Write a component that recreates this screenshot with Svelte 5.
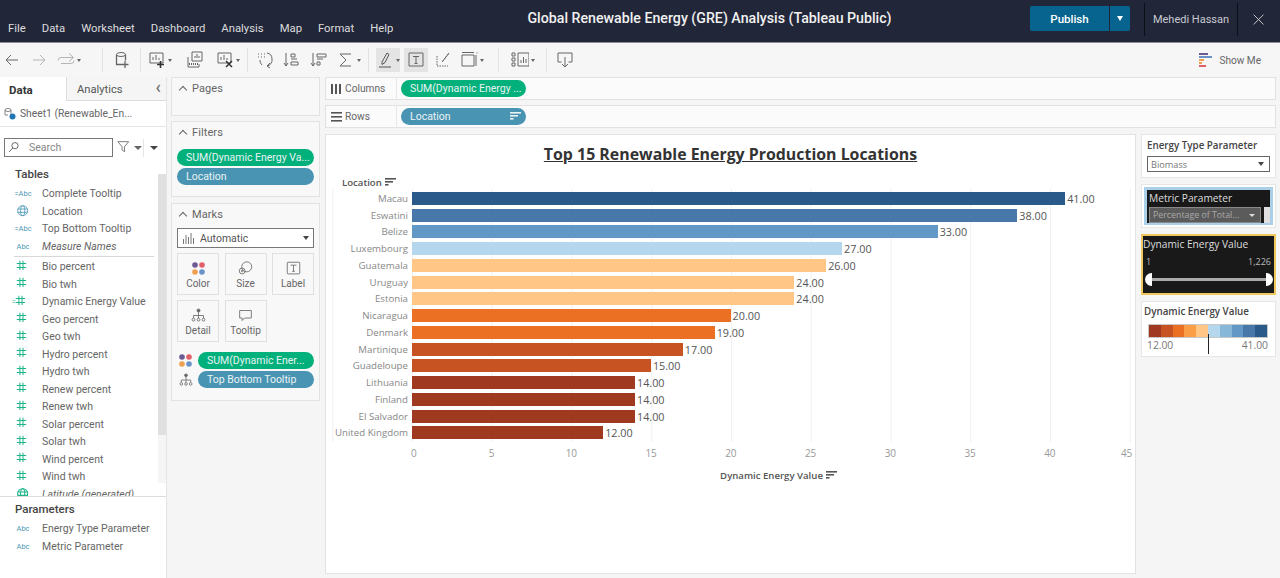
<script>
  const menu = ['File','Data','Worksheet','Dashboard','Analysis','Map','Format','Help'];
  const svg = {
    back:'<path d="M15 9H3M8 4L3 9l5 5" />',
    fwd:'<path d="M3 9h12M10 4l5 5-5 5" />',
    undo:'<path d="M1 9.500a3 3 0 0 1 3-3h12M12 2.500l4.500 4-4.500 4M4 12.500h10a3 3 0 0 0 3-3" />',
    newds:'<ellipse cx="8" cy="3.500" rx="4.500" ry="2"/><path d="M3.500 3.500v10h5M12.500 3.500v6M12 10v7M8.500 13.500h7" stroke-width="1.300"/>',
    newws:'<path d="M2 2h13v10H2zM5 9V6M8 9V4M11 9V7"/><path d="M12.500 10v7M9 13.500h7" stroke="#333" stroke-width="1.600"/>',
    dupe:'<path d="M7 1h10v9H7zM10 7V5M12 7V3M14 7V5M3 6v10h11v-3"/><path d="M4 13h9" stroke-dasharray="1 1" stroke-width="2"/>',
    clear:'<path d="M2 2h13v10H2zM5 9V6M8 9V4M11 9V7"/><path d="M10 10l6 6M16 10l-6 6" stroke="#333" stroke-width="1.500"/>',
    swap:'<path d="M2 3h1M5 3h1M8 3h1M2 6h1M5 6h1M8 6h1M11 2a6 6 0 0 1 5 6 6 6 0 0 1-5 7M14 12l-3 3 3 2M4 9a6 6 0 0 0 2 5" />',
    sortA:'<path d="M3 2v13M1 12l2 3 2-3M8 3h4v3H8zM8 8h6M8 11h7v3H8z"/>',
    sortD:'<path d="M3 2v13M1 12l2 3 2-3M7 3h9v3H7zM7 8h6M7 11h3v3H7z"/>',
    sum:'<path d="M14 3H3l6 6-6 6h11" />',
    high:'<path d="M6 11L11 2l2 1.500-4 8-3 2zM3 16h12" stroke="#555"/>',
    text:'<path d="M2 2h14v13H2z"/><path d="M6 5.500h6M9 5.500v7M7.500 12.500h3" />',
    fix:'<path d="M2 5v10h11M8 10l6-8" stroke-dasharray="1.500 1"/><path d="M7 11l7-9" />',
    fit:'<path d="M2 4h12v11H2zM2 1.500h12M16 4v11" /><path d="M17 1.500v1" />',
    cards:'<path d="M1 2h3v3H1zM1 7h3v3H1zM1 12h3v3H1zM7 2h11v13H7zM10 12V9M12.500 12V6M15 12V8" />',
    tip:'<path d="M5.500 11H2V2h14v9h-3.500M9 6v10M6 13l3 3 3-3"/>',
    size:'<circle cx="10.500" cy="7" r="6"/><circle cx="5" cy="12" r="3.500"/><circle cx="5" cy="12" r="1"/>',
    label:'<rect x="1.500" y="1.500" width="15" height="14" rx="1"/><path d="M5.500 5h7M9 5v7.500M7.500 12.500h3"/>',
    detail:'<circle cx="9" cy="3" r="1.800" fill="#666"/><path d="M9 5v4M3 12V9h12v3M9 9v3"/><circle cx="3" cy="14" r="1.700"/><circle cx="9" cy="14" r="1.700"/><circle cx="15" cy="14" r="1.700"/>',
    bubble:'<path d="M2 3h14v9H8l-3 3v-3H2z"/>',
    search:'<circle cx="9" cy="6" r="4"/><path d="M6 9l-4.500 5"/>',
    funnel:'<path d="M1 2h13L9 8v6l-3-2V8z"/>',
    globe:'<circle cx="8" cy="8" r="6"/><ellipse cx="8" cy="8" rx="2.500" ry="6"/><path d="M2 6h12M2 10h12"/>',
    close:'<path d="M3 3l11 11M14 3L3 14"/>',
    hash:'<path d="M5 1v12M9 1v12M1 4.500h12M1 9.500h12"/>'
  };
  const tools = [
    { w:103, cls:'g-a', items:[['back',18],['fwd',18,1],['undo',18,1,1,1]] },
    { w:38, cls:'', items:[['newds',18]] },
    { w:107, cls:'g-c', items:[['newws',18,0,1],['dupe',18],['clear',18,0,1]] },
    { w:121, cls:'g-d', items:[['swap',18],['sortA',18],['sortD',18],['sum',18,0,1]] },
    { w:130, cls:'g-e', items:[['high',18,0,1,0,1],['text',18,0,0,0,1],['fix',18],['fit',18,0,1]] },
    { w:48, cls:'', items:[['cards',18,0,1]] },
    { w:36, cls:'', items:[['tip',18]] }
  ];
  const dims = [
    ['calc','Complete Tooltip'],['globe','Location'],['calc','Top Bottom Tooltip'],['abc','Measure Names',1]
  ];
  const meas = ['Bio percent','Bio twh','Dynamic Energy Value','Geo percent','Geo twh','Hydro percent','Hydro twh','Renew percent','Renew twh','Solar percent','Solar twh','Wind percent','Wind twh'];
  const bars = [
    ['Macau',41,'#2a5a8a'],['Eswatini',38,'#4778a9'],['Belize',33,'#6298c6'],['Luxembourg',27,'#b5d7ee'],
    ['Guatemala',26,'#ffc685'],['Uruguay',24,'#ffc685'],['Estonia',24,'#ffc685'],['Nicaragua',20,'#ec7024'],
    ['Denmark',19,'#ec7024'],['Martinique',17,'#c75222'],['Guadeloupe',15,'#c75222'],['Lithuania',14,'#9f3a20'],
    ['Finland',14,'#9f3a20'],['El Salvador',14,'#9f3a20'],['United Kingdom',12,'#9f3a20']
  ];
  const ticks = [0,5,10,15,20,25,30,35,40,45];
  const ramp = ['#9f3a20','#c75222','#ec7024','#fa9f47','#ffc685','#b5d7ee','#86b7d9','#6298c6','#4778a9','#2a5a8a'];
</script>

{#snippet ic(name, size = 18, cls = '')}
  <svg class="ic {cls}" width={size} height={size} viewBox="0 0 18 18" fill="none" stroke="currentColor" stroke-width="1">{@html svg[name]}</svg>
{/snippet}
{#snippet sorter()}
  <svg class="sorter" width="11" height="9" viewBox="0 0 11 9" fill="currentColor"><rect width="11" height="1.600"/><rect y="3" width="8" height="1.600"/><rect y="6" width="3.500" height="1.600"/></svg>
{/snippet}
{#snippet dots()}
  <svg width="13" height="13" viewBox="0 0 13 13"><circle cx="3" cy="3" r="2.800" fill="#6c5a92"/><circle cx="10" cy="3" r="2.800" fill="#e0606a"/><circle cx="3" cy="10" r="2.800" fill="#f0a050"/><circle cx="10" cy="10" r="2.800" fill="#6a93c8"/></svg>
{/snippet}

<div class="app">
  <header class="top">
    <nav class="menu">{#each menu as m}<span>{m}</span>{/each}</nav>
    <h1>Global Renewable Energy (GRE) Analysis (Tableau Public)</h1>
    <div class="acct">
      <div class="pub"><span class="pub-main">Publish</span><span class="pub-car"><i class="tri white"></i></span></div>
      <span class="user">Mehedi Hassan</span>
      <span class="x">{@render ic('close', 16)}</span>
    </div>
  </header>

  <div class="toolbar">
    {#each tools as g}
      <div class="tgroup {g.cls}" style="width:{g.w}px">
        {#each g.items as t}
          <span class="tool" class:dim={t[2]} class:on={t[5]}>{@render ic(t[0], t[1])}{#if t[3]}<i class="tri small"></i>{/if}</span>
        {/each}
      </div>
    {/each}
    <div class="showme">
      <svg width="13" height="14" viewBox="0 0 13 14"><rect width="9" height="2" fill="#6c5a92"/><rect y="3" width="13" height="2" fill="#6a93c8"/><rect y="6" width="5" height="2" fill="#f0a050"/><rect y="9" width="3" height="2" fill="#f0a050"/><rect y="12" width="7" height="2" fill="#e0606a"/></svg>
      <span>Show Me</span>
    </div>
  </div>

  <div class="body">
    <aside class="data">
      <div class="tabs">
        <span class="tab act">Data</span>
        <span class="tab">Analytics</span>
        <span class="chev">‹</span>
      </div>
      <div class="source">
        <svg width="13" height="13" viewBox="0 0 13 13" fill="none" stroke="#888"><ellipse cx="5" cy="3" rx="3" ry="1.500"/><path d="M2 3v5h3M8 3v4"/><circle cx="9.500" cy="9.500" r="3" fill="#1f77b4" stroke="none"/></svg>
        <span>Sheet1 (Renewable_En...</span>
      </div>
      <div class="searchrow">
        <div class="search">{@render ic('search', 14)}<span>Search</span></div>
        <span class="funnel">{@render ic('funnel', 15)}<i class="tri small"></i></span>
        <i class="vsep"></i>
        <i class="tri dark"></i>
      </div>
      <div class="fields">
        <div class="scroll"><i></i></div>
        <div class="flist">
          <h3>Tables</h3>
          {#each dims as d}
            <div class="field" class:em={d[2]}>
              <span class="fi">
                {#if d[0]==='globe'}<span class="teal">{@render ic('globe', 15)}</span>
                {:else}<span class="abc">{d[0]==='calc'?'=':''}Abc</span>{/if}
              </span>
              <span>{d[1]}</span>
            </div>
          {/each}
          <hr />
          {#each meas as m}
            <div class="field">
              <span class="fi green">{#if m.startsWith('Dynamic')}<b>=</b>{/if}{@render ic('hash', 14)}</span>
              <span>{m}</span>
            </div>
          {/each}
          <div class="field em cut"><span class="fi green">{@render ic('globe', 15)}</span><span>Latitude (generated)</span></div>
        </div>
      </div>
      <div class="params">
        <h3>Parameters</h3>
        <div class="field"><span class="fi"><span class="abc">Abc</span></span><span>Energy Type Parameter</span></div>
        <div class="field"><span class="fi"><span class="abc">Abc</span></span><span>Metric Parameter</span></div>
      </div>
    </aside>

    <section class="cards">
      <div class="card pages"><div class="chd"><i class="up"></i>Pages</div></div>
      <div class="card filters">
        <div class="chd"><i class="up"></i>Filters</div>
        <div class="pill g">SUM(Dynamic Energy Va...</div>
        <div class="pill b">Location</div>
      </div>
      <div class="card marks">
        <div class="chd"><i class="up"></i>Marks</div>
        <div class="select">
          <svg width="12" height="11" viewBox="0 0 12 11" stroke="#777" fill="none"><path d="M1.500 11V6M4 11V2M6.500 11V4M9 11V0M11.500 11V5"/></svg>
          <span>Automatic</span><i class="tri dark"></i>
        </div>
        <div class="mbtns">
          <div class="mbtn">{@render dots()}<span>Color</span></div>
          <div class="mbtn">{@render ic('size', 15)}<span>Size</span></div>
          <div class="mbtn">{@render ic('label', 15)}<span>Label</span></div>
          <div class="mbtn">{@render ic('detail', 15)}<span>Detail</span></div>
          <div class="mbtn">{@render ic('bubble', 15)}<span>Tooltip</span></div>
        </div>
        <div class="mrow">{@render dots()}<div class="pill g">SUM(Dynamic Ener...</div></div>
        <div class="mrow">{@render ic('detail', 14)}<div class="pill b">Top Bottom Tooltip</div></div>
      </div>
    </section>

    <main class="main">
      <div class="shelf">
        <div class="slabel"><svg width="11" height="10" viewBox="0 0 11 10" fill="#555"><rect width="2" height="10"/><rect x="4" width="2" height="10"/><rect x="8" width="2" height="10"/></svg>Columns</div>
        <div class="pill g wide">SUM(Dynamic Energy ...</div>
      </div>
      <div class="shelf">
        <div class="slabel"><svg width="11" height="10" viewBox="0 0 11 10" fill="#555"><rect width="11" height="1.600"/><rect y="4" width="11" height="1.600"/><rect y="8" width="11" height="1.600"/></svg>Rows</div>
        <div class="pill b wide rowpill"><span>Location</span>{@render sorter()}</div>
      </div>
      <div class="stage">
        <div class="sheet">
          <h2>Top 15 Renewable Energy Production Locations</h2>
          <div class="axhead">Location {@render sorter()}</div>
          <div class="plot">
            {#each bars as b}
              <div class="row">
                <span class="loc">{b[0]}</span>
                <div class="track">
                  <div class="bar" style="width:{b[1]*15.93}px;background:{b[2]}"></div>
                  <span class="val">{b[1]}.00</span>
                </div>
              </div>
            {/each}
          </div>
          <div class="axis">
            {#each ticks as t}<span>{t}</span>{/each}
          </div>
          <div class="axtitle">Dynamic Energy Value {@render sorter()}</div>
        </div>
        <div class="side">
          <div class="pcard">
            <div class="ptitle">Energy Type Parameter</div>
            <div class="pselect"><span>Biomass</span><i class="tri dark"></i></div>
          </div>
          <div class="pcard metric">
            <div class="blk blue">
              <div class="ptitle lt">Metric Parameter</div>
              <div class="mselrow"><div class="msel"><span>Percentage of Total...</span><i class="tri white"></i></div><i class="stub"></i></div>
            </div>
          </div>
          <div class="pcard dyn">
            <div class="blk yellow">
              <div class="ptitle lt">Dynamic Energy Value</div>
              <div class="range"><span>1</span><span>1,226</span></div>
              <div class="slider"><i class="knob l"></i><i class="knob r"></i></div>
            </div>
          </div>
          <div class="pcard legend">
            <div class="ptitle">Dynamic Energy Value</div>
            <div class="ramp">{#each ramp as c}<i style="background:{c}"></i>{/each}</div>
            <div class="rlab"><span>12.00</span><span>41.00</span><i class="mark"></i></div>
          </div>
        </div>
      </div>
    </main>
  </div>
</div>

<style>
  :global(body){margin:0;background:#f5f5f5;}
  *{box-sizing:border-box;}
  i{display:block;font-style:normal;}
  .app{width:1280px;height:578px;overflow:hidden;display:flex;flex-direction:column;font-family:Roboto,"Liberation Sans",sans-serif;color:#666;background:#f5f5f5;}
  .ic{display:block;flex:none;}

  .tri{width:0;height:0;border-left:4px solid transparent;border-right:4px solid transparent;border-top:5px solid #333;}
  .tri.white{border-top-color:#ddd;}
  .tri.dark{border-top-color:#444;}
  .tri.small{border-left-width:2px;border-right-width:2px;border-top-width:3px;border-top-color:#666;margin-left:2px;}

  .top{height:43px;flex:none;background:#222639;border-bottom:1px solid #8a8d99;display:flex;position:relative;color:#ddd;}
  .menu{display:flex;gap:16px;padding:21px 0 0 8px;font-size:11.300px;line-height:15px;}
  .top h1{position:absolute;left:0;right:0;top:0;margin:0;padding:10px 0 0 139px;text-align:center;font-size:14.200px;font-weight:500;color:#f1f1f1;line-height:17px;pointer-events:none;}
  .acct{margin-left:auto;display:flex;align-items:center;height:42px;padding-bottom:3px;}
  .pub{display:flex;height:25px;margin-right:14px;margin-top:-2px;}
  .pub-main{width:79px;background:#06648e;color:#fff;font-size:11.500px;font-weight:500;display:flex;align-items:center;justify-content:center;border-radius:2px 0 0 2px;}
  .pub-car{width:20px;margin-left:1px;background:#06648e;display:flex;align-items:center;justify-content:center;border-radius:0 2px 2px 0;}
  .pub-car .tri{border-left-width:3.500px;border-right-width:3.500px;border-top-color:#fff;}
  .user{height:33px;width:94px;border-left:1px solid #0d0f18;border-right:1px solid #0d0f18;font-size:11px;display:flex;align-items:center;justify-content:center;color:#c9cbd2;}
  .x{width:42px;display:flex;justify-content:center;color:#d8d8d8;}

  .toolbar{height:34px;flex:none;display:flex;align-items:center;background:#f6f6f6;}
  .tgroup{height:24px;display:flex;align-items:center;justify-content:center;border-right:1px solid #e2e2e2;color:#666;}
  .tgroup:nth-child(7){border-right:0;}
  .tool{display:flex;align-items:center;justify-content:center;height:24px;}
  .tool.dim{color:#b5b5b5;}
  .tool.on{background:#e4e4e4;}
  .g-a{justify-content:flex-start;padding-left:3px;gap:9px;}
  .g-c{gap:13px;}
  .g-d{gap:9px;}
  .g-e{gap:4px;justify-content:flex-start;padding-left:7px;}
  .g-e .tool{width:24px;}
  .showme{margin-left:auto;display:flex;align-items:center;gap:7px;padding-right:19px;font-size:10.100px;color:#666;}

  .body{flex:1;display:flex;min-height:0;}
  .data{width:167px;flex:none;background:#fff;border-right:1px solid #e4e4e4;display:flex;flex-direction:column;}
  .tabs{height:24px;flex:none;display:flex;align-items:center;background:#f5f5f5;font-size:11.200px;position:relative;}
  .tab{height:24px;display:flex;align-items:center;padding-top:1px;}
  .tab.act{width:67px;background:#fff;font-weight:700;color:#333;padding-left:9px;border-right:1px solid #ddd;font-size:11.500px;}
  .tab:not(.act){padding-left:10px;flex:1;border-bottom:1px solid #ddd;height:24px;color:#555;}
  .chev{position:absolute;right:5px;top:1px;font-size:18px;line-height:18px;color:#666;}
  .source{height:26px;flex:none;display:flex;align-items:center;gap:4px;padding-left:3px;border-bottom:1px solid #e4e4e4;font-size:10.300px;color:#666;}
  .searchrow{height:38px;flex:none;display:flex;align-items:center;padding:3px 0 0 4px;}
  .search{width:109px;height:19px;border:1px solid #777;display:flex;align-items:center;gap:7px;padding-left:3px;font-size:10.500px;color:#888;}
  .search :global(svg){color:#444;}
  .funnel{display:flex;align-items:center;margin-left:4px;color:#666;}
  .vsep{width:1px;height:18px;background:#e4e4e4;margin:0 6px 0 1px;}
  .searchrow .tri{border-left-width:4px;border-right-width:4px;border-top-width:4px;}
  .fields{flex:1;min-height:0;overflow:hidden;display:flex;flex-direction:row-reverse;border-bottom:1px solid #ddd;}
  .flist{flex:1;min-width:0;}
  .scroll{width:8px;background:#f5f5f5;margin-top:9px;height:309px;}
  .scroll i{height:261px;background:#e0e0e0;}
  h3{margin:0;font-size:11.500px;font-weight:500;color:#444;padding-left:15px;height:17px;line-height:17px;}
  .flist h3{margin-top:1px;margin-bottom:2px;}
  .field{height:17.500px;display:flex;align-items:center;font-size:10.500px;color:#666;white-space:nowrap;}
  .field.em{font-style:italic;}
  .fi{width:42px;flex:none;display:flex;align-items:center;justify-content:center;padding-left:4px;}
  .abc{font-size:7.500px;color:#4b97b4;letter-spacing:0;font-style:normal;}
  .teal{color:#4b97b4;}
  .green{color:#1eb48a;}
  .green b{font-size:7px;font-weight:400;margin-right:-1px;margin-left:-5px;}
  .green :global(svg){stroke-width:1.300;}
  hr{border:0;border-top:1px solid #d8d8d8;margin:1px 4px 1px 14px;}
  .params{height:81px;flex:none;padding-top:4px;}
  .params h3{margin-bottom:2px;}

  .cards{width:158px;flex:none;padding:0 0 0 4px;display:flex;flex-direction:column;}
  .card{width:149px;background:#f8f8f8;border:1px solid #e2e2e2;}
  .pages{height:39px;}
  .filters{height:76px;margin-top:5px;}
  .marks{height:198px;margin-top:6px;}
  .chd{height:21px;display:flex;align-items:center;font-size:11px;color:#666;padding-left:7px;gap:5px;letter-spacing:.1px;}
  .up{width:6px;height:6px;border-left:1px solid #666;border-top:1px solid #666;transform:rotate(45deg);margin:3px 1px 0 1px;}
  .pill{height:17px;border-radius:9px;color:#e9f3f3;font-size:10.500px;line-height:17px;padding-left:9px;white-space:nowrap;overflow:hidden;}
  .pill.g{background:#02b07c;}
  .pill.b{background:#4a94b3;}
  .filters .pill{margin:2px 5px 0;}
  .filters .pill.g{margin-top:6px;}
  .select{margin:3px 5px 0;height:20px;background:#fff;border:1px solid #777;display:flex;align-items:center;padding:0 4px;gap:6px;font-size:10.500px;color:#555;}
  .select .tri{margin-left:auto;border-left-width:3.500px;border-right-width:3.500px;border-top-width:4px;}
  .mbtns{margin:5px 5px 0;display:grid;grid-template-columns:42px 42px 42px;gap:5px 5.500px;}
  .mbtn{height:42px;border:1px solid #e0e0e0;display:grid;grid-template-rows:16px auto;justify-items:center;align-items:center;padding-top:6px;row-gap:2px;align-content:start;font-size:10px;color:#666;}
  .mrow{display:flex;align-items:center;margin:2px 5px 0 7px;}
  .mbtns + .mrow{margin-top:10px;}
  .mrow .pill{margin-left:auto;width:116px;}
  .mrow :global(svg){color:#666;}
  .mbtn :global(svg){color:#666;}

  .main{flex:1;min-width:0;display:flex;flex-direction:column;gap:5px;padding-right:4px;}
  .shelf{height:23px;flex:none;display:flex;align-items:center;background:#fbfbfb;border:1px solid #e2e2e2;}
  .slabel{width:71px;height:21px;display:flex;align-items:center;gap:3px;padding-left:5px;font-size:10.200px;color:#666;border-right:1px solid #e8e8e8;flex:none;}
  .pill.wide{width:125px;margin-left:4px;}
  .rowpill{display:flex;align-items:center;justify-content:space-between;padding-right:5px;}
  .stage{flex:1;min-height:0;display:flex;gap:5px;padding-bottom:4px;margin-top:1px;}
  .sheet{width:811px;flex:none;background:#fff;border:1px solid #e2e2e2;font-family:"Open Sans","DejaVu Sans",sans-serif;}
  .sheet h2{margin:9px 0 0;text-align:center;font-size:15.900px;line-height:21px;font-weight:700;color:#333;text-decoration:underline;}
  .axhead{margin:10px 0 0 16px;height:14px;font-size:9.600px;font-weight:600;color:#555;display:flex;align-items:center;gap:3px;}
  .sorter{display:block;flex:none;}
  .plot{height:253px;margin-top:0;background-image:linear-gradient(90deg,#f0f0f0 1px,transparent 1px);background-size:79.750px 100%;background-position:86px 0;padding-top:1px;}
  .row{height:16.750px;display:flex;align-items:center;}
  .loc{width:82px;flex:none;text-align:right;font-size:9.700px;color:#888;white-space:nowrap;}
  .track{margin-left:4px;display:flex;align-items:center;}
  .bar{height:13px;}
  .val{margin-left:2px;font-size:10.800px;color:#555;}
  .axis{display:flex;margin:3px 0 0 46px;height:16px;font-size:10px;color:#999;align-items:center;}
  .axis span{width:79.750px;flex:none;text-align:center;}
  .axis span:first-child{padding-left:4px;}
  .axis span:last-child{padding-right:6px;}
  .axtitle{display:flex;align-items:center;justify-content:center;gap:3px;font-size:9.600px;font-weight:600;color:#555;margin-top:7px;padding-left:96px;height:14px;}

  .side{width:135px;flex:none;display:flex;flex-direction:column;gap:6px;font-family:"Open Sans","DejaVu Sans",sans-serif;}
  .pcard{background:#fff;border:1px solid #e6e6e6;width:135px;}
  .ptitle{font-size:9.800px;font-weight:600;color:#444;line-height:13px;white-space:nowrap;}
  .pcard:first-child{height:44px;padding:4px 5px;}
  .pselect{margin-top:4px;height:16px;border:1px solid #666;display:flex;align-items:center;justify-content:space-between;padding:0 5px 0 3px;font-size:9.200px;color:#777;}
  .pselect .tri{border-left-width:3px;border-right-width:3px;border-top-width:4px;}
  .metric{height:44px;padding:2px;}
  .blk{background:#191919;}
  .blue{height:38px;border:3px solid #a9cfe9;border-bottom-width:2px;padding:2px 0 0 2px;overflow:hidden;}
  .ptitle.lt{color:#ddd;font-weight:400;font-size:10.200px;}
  .mselrow{display:flex;gap:3px;margin-top:2px;}
  .msel{width:112px;height:16px;background:#5b5b5b;border:1px solid #888;color:#aaa;font-size:8.800px;display:flex;align-items:center;justify-content:space-between;padding:0 5px 0 3px;white-space:nowrap;}
  .msel .tri{border-left-width:3px;border-right-width:3px;border-top-width:3px;}
  .stub{width:6px;height:16px;background:#e0e0e0;flex:none;}
  .dyn{height:61px;border:0;background:transparent;}
  .yellow{height:61px;border:2px solid #f0c75e;padding:2px 0 0 0;}
  .range{display:flex;justify-content:space-between;font-size:9px;color:#bbb;padding:5px 3px 0 3px;line-height:12px;}
  .slider{position:relative;height:3px;background:#aaa;margin:10px 3px 0 3px;}
  .knob{position:absolute;top:-5px;width:7px;height:13px;background:#fff;}
  .knob.l{left:-1px;border-radius:7px 0 0 7px;}
  .knob.r{right:-2px;border-radius:0 7px 7px 0;}
  .legend{height:56px;padding:3px 2px 0;}
  .ramp{display:flex;margin:6px 0 0 4px;width:120px;height:14px;border:1px solid #c8c8c8;}
  .ramp i{flex:1;}
  .rlab{position:relative;display:flex;justify-content:space-between;margin:1px 5px 0 3px;font-size:10.300px;line-height:13px;color:#777;}
  .mark{position:absolute;left:61px;top:-5px;width:1px;height:20px;background:#222;}
</style>
